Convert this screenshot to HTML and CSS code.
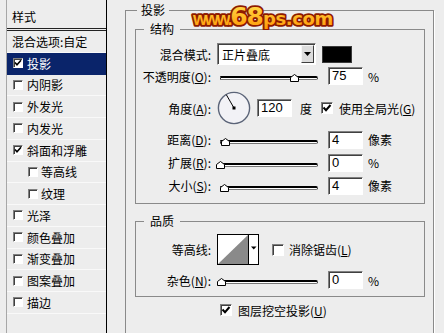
FILE: index.html
```html
<!DOCTYPE html>
<html>
<head>
<meta charset="utf-8">
<link rel="stylesheet" href="styles.css">
</head>
<body>
<div class="dialog">
  <div class="sidebar">
    <div class="sb-head">样式</div>
    <div class="sb-item plain">混合选项:自定</div>
    <div class="sb-item sel"><span class="cb"><svg width="8" height="8" viewBox="0 0 8 8"><path d="M1 3.5L3 5.8L7 1.2" stroke="#000" stroke-width="1.6" fill="none"/></svg></span>投影</div>
    <div class="sb-item"><span class="cb"></span>内阴影</div>
    <div class="sb-item"><span class="cb"></span>外发光</div>
    <div class="sb-item"><span class="cb"></span>内发光</div>
    <div class="sb-item"><span class="cb"><svg width="8" height="8" viewBox="0 0 8 8"><path d="M1 3.5L3 5.8L7 1.2" stroke="#000" stroke-width="1.6" fill="none"/></svg></span>斜面和浮雕</div>
    <div class="sb-item sub"><span class="cb"></span>等高线</div>
    <div class="sb-item sub"><span class="cb"></span>纹理</div>
    <div class="sb-item"><span class="cb"></span>光泽</div>
    <div class="sb-item"><span class="cb"></span>颜色叠加</div>
    <div class="sb-item"><span class="cb"></span>渐变叠加</div>
    <div class="sb-item"><span class="cb"></span>图案叠加</div>
    <div class="sb-item"><span class="cb"></span>描边</div>
  </div>

  <div class="main">
    <fieldset class="grp outer">
      <legend>投影</legend>

      <fieldset class="grp struct">
        <legend>结构</legend>
        <div class="row r-mode">
          <span class="lbl">混合模式:</span>
          <div class="select"><span class="sel-text">正片叠底</span><span class="sel-btn"><svg width="7" height="4" viewBox="0 0 7 4"><path d="M0 0H7L3.5 4Z" fill="#000"/></svg></span></div>
          <span class="swatch"></span>
        </div>
        <div class="row r-opac">
          <span class="lbl">不透明度(<u>O</u>):</span>
          <div class="slider"><div class="track"></div><svg class="thumb" style="left:72.5px" width="9" height="8" viewBox="0 0 9 8"><path d="M0.5 7.5V3.5L4.5 0.5L8.5 3.5V7.5Z" fill="#fff" stroke="#000"/></svg></div>
          <span class="field">75</span><span class="unit">%</span>
        </div>
        <div class="row r-angle">
          <span class="lbl">角度(<u>A</u>):</span>
          <svg class="dial" width="34" height="34" viewBox="0 0 34 34"><circle cx="17" cy="17" r="15.6" fill="#f2f2f6" stroke="#5b6478" stroke-width="1.4"/><line x1="17" y1="17" x2="9.3" y2="3.7" stroke="#000" stroke-width="1"/><rect x="15.5" y="15.5" width="3" height="3" fill="#000"/></svg>
          <span class="field f-angle">120</span><span class="unit u-deg">度</span>
          <span class="cb big c-global"><svg width="10" height="10" viewBox="0 0 10 10"><path d="M1.5 4.5L4 7.2L8.5 2" stroke="#000" stroke-width="2" fill="none"/></svg></span><span class="cb-lbl">使用全局光(<u>G</u>)</span>
        </div>
        <div class="row r-tall">
          <span class="lbl">距离(<u>D</u>):</span>
          <div class="slider"><div class="track"></div><svg class="thumb" style="left:3.5px" width="9" height="8" viewBox="0 0 9 8"><path d="M0.5 7.5V3.5L4.5 0.5L8.5 3.5V7.5Z" fill="#fff" stroke="#000"/></svg></div>
          <span class="field">4</span><span class="unit">像素</span>
        </div>
        <div class="row r-tall">
          <span class="lbl">扩展(<u>R</u>):</span>
          <div class="slider"><div class="track"></div><svg class="thumb" style="left:-1.5px" width="9" height="8" viewBox="0 0 9 8"><path d="M0.5 7.5V3.5L4.5 0.5L8.5 3.5V7.5Z" fill="#fff" stroke="#000"/></svg></div>
          <span class="field">0</span><span class="unit">%</span>
        </div>
        <div class="row r-tall">
          <span class="lbl">大小(<u>S</u>):</span>
          <div class="slider"><div class="track"></div><svg class="thumb" style="left:2.5px" width="9" height="8" viewBox="0 0 9 8"><path d="M0.5 7.5V3.5L4.5 0.5L8.5 3.5V7.5Z" fill="#fff" stroke="#000"/></svg></div>
          <span class="field">4</span><span class="unit">像素</span>
        </div>
      </fieldset>

      <fieldset class="grp quality">
        <legend>品质</legend>
        <div class="row r-contour">
          <span class="lbl">等高线:</span>
          <svg class="contour" width="42" height="31" viewBox="0 0 42 31"><rect x="0.5" y="0.5" width="41" height="30" fill="#fff" stroke="#000"/><path d="M1 30V1H31Z" fill="#fff"/><path d="M31 1V30H1Z" fill="#8a8a8a"/><line x1="31.5" y1="0.5" x2="31.5" y2="30.5" stroke="#000"/><path d="M34 12.5H39.5L36.75 15.5Z" fill="#000"/></svg>
          <span class="cb big c-anti"></span><span class="cb-lbl">消除锯齿(<u>L</u>)</span>
        </div>
        <div class="row r-noise">
          <span class="lbl">杂色(<u>N</u>):</span>
          <div class="slider"><div class="track"></div><svg class="thumb" style="left:-0.5px" width="9" height="8" viewBox="0 0 9 8"><path d="M0.5 7.5V3.5L4.5 0.5L8.5 3.5V7.5Z" fill="#fff" stroke="#000"/></svg></div>
          <span class="field">0</span><span class="unit">%</span>
        </div>
      </fieldset>

      <div class="row r-knock">
        <span class="cb big"><svg width="10" height="10" viewBox="0 0 10 10"><path d="M1.5 4.5L4 7.2L8.5 2" stroke="#000" stroke-width="2" fill="none"/></svg></span><span class="cb-lbl">图层挖空投影(<u>U</u>)</span>
      </div>
    </fieldset>
  </div>

  <svg class="logo" width="150" height="30" viewBox="0 0 150 30">
    <defs>
      <linearGradient id="lg" x1="0" y1="0" x2="0" y2="1">
        <stop offset="0" stop-color="#ffe24e"/>
        <stop offset="1" stop-color="#ff9200"/>
      </linearGradient>
    </defs>
    <text x="5" y="25" font-weight="bold" fill="url(#lg)" stroke="#8e1b00" stroke-width="3.6" stroke-linejoin="round" paint-order="stroke"><tspan font-family="Liberation Sans, sans-serif" font-size="18" letter-spacing="-2.3">www.</tspan><tspan font-family="DejaVu Sans, sans-serif" font-size="25" letter-spacing="-1">68</tspan><tspan font-family="DejaVu Sans, sans-serif" font-size="18" letter-spacing="-0.4">ps.com</tspan></text>
  </svg>
</div>
</body>
</html>
```

FILE: styles.css
```css
* { box-sizing: border-box; }
html, body { margin: 0; padding: 0; }
body {
  width: 444px;
  height: 333px;
  overflow: hidden;
  background: #ededed;
  font-family: "Noto Sans CJK SC", "Liberation Sans", sans-serif;
  font-size: 12px;
  color: #000;
}
.dialog { position: relative; display: flex; height: 333px; }

/* sidebar */
.sidebar {
  flex: none;
  margin-left: 6px;
  width: 101px;
  height: 333px;
  border-left: 1px solid #a7a7a7;
  border-right: 1px solid #000;
}
.sb-head {
  height: 31px;
  padding: 5px 0 0 5px;
  display: flex;
  align-items: center;
  border-bottom: 3px double #222;
}
.sb-item {
  height: 21.75px;
  display: flex;
  align-items: center;
  padding-left: 6px;
  border-bottom: 1px solid #f9f9f9;
  white-space: nowrap;
}
.sb-item.plain { padding-left: 5px; }
.sb-item.sub { padding-left: 21px; }
.sb-item.sel { background: #0a246a; color: #fff; border-bottom-color: #0a246a; }

.cb {
  flex: none;
  width: 10px;
  height: 10px;
  margin-right: 4px;
  background: #fff;
  border: 1px solid;
  border-color: #808080 #fff #fff #808080;
  box-shadow: inset 1px 1px 0 #404040;
  display: flex;
}
.cb svg { display: block; }
.sb-item.sub .cb { margin-right: 3px; }
.cb.big { width: 12px; height: 12px; margin-right: 0; }
.cb-lbl { margin-left: 6px; }

/* main */
.main { flex: 1; min-width: 0; }
.grp {
  margin: 0;
  padding: 0;
  border: 1px solid #8a8a8a;
  min-width: 0;
}
.grp > legend {
  padding: 0 6px;
  margin-left: 8px;
  height: 16px;
  line-height: 16px;
  background: #ededed;
}
.outer {
  margin: 2px 0 0 18px;
  width: 309px;
  height: 345px;
  padding: 3px 8px 0 9px;
  box-shadow: 1px 1px 0 #fff;
}
.outer > legend { margin-left: 2px; padding: 0 4px; }
.struct { padding: 6px 0 6px 0; }
.quality { margin-top: 9px; padding: 5px 0 6px 0; }

.row {
  display: flex;
  align-items: center;
  height: 22px;
  white-space: nowrap;
}
.lbl { flex: none; width: 75px; text-align: right; }
.r-angle { height: 34px; margin-top: 4px; }
.r-tall { height: 23px; }
.r-angle + .r-tall { margin-top: 3px; }
.r-contour { height: 31px; }
.r-noise { height: 20px; margin-top: 5px; }
.r-knock { height: 18px; margin-top: 4px; padding-left: 85px; }
.r-knock .cb-lbl { margin-left: 6px; }

/* controls */
.select {
  flex: none;
  display: flex;
  align-items: center;
  width: 99px;
  height: 22px;
  margin-left: 6px;
  background: #fff;
  border: 1px solid;
  border-color: #808080 #fff #fff #808080;
  box-shadow: inset 1px 1px 0 #404040;
  padding: 1px 1px 1px 4px;
}
.sel-text { flex: 1; }
.sel-btn {
  flex: none;
  width: 13px;
  height: 18px;
  background: #dcdcdc;
  border: 1px solid;
  border-color: #f6f6f6 #404040 #404040 #f6f6f6;
  display: flex;
  align-items: center;
  justify-content: center;
}
.sel-btn svg { display: block; }
.swatch {
  flex: none;
  width: 30px;
  height: 17px;
  margin-left: 6px;
  background: #000;
  border: 1px solid #3a3a3a;
}

.slider {
  position: relative;
  flex: none;
  width: 101px;
  height: 10px;
  margin-left: 6px;
}
.track {
  position: absolute;
  left: 3px;
  right: 0;
  top: 5px;
  height: 4px;
  background: #fff;
  border: 1px solid #333;
  border-top: 2px solid #000;
  border-bottom-color: #777;
  border-radius: 0 2px 2px 0;
}
.thumb { position: absolute; top: 3px; display: block; }

.field {
  flex: none;
  width: 35px;
  height: 18px;
  margin-left: 10px;
  background: #fff;
  border: 1px solid;
  border-color: #808080 #fff #fff #808080;
  box-shadow: inset 1px 1px 0 #404040;
  padding-left: 3px;
  font: 13px/16px "Liberation Sans", sans-serif;
}
.unit { margin-left: 5px; }

.dial { flex: none; margin-left: 6px; display: block; }
.f-angle { margin-left: 6px; }
.u-deg { margin-left: 8px; }
.c-global { margin-left: 9px; }

.contour { flex: none; margin-left: 6px; display: block; }
.c-anti { margin-left: 13px; }
.r-contour .cb-lbl { margin-left: 5px; }

.logo { position: absolute; left: 188px; top: 0; }
```
